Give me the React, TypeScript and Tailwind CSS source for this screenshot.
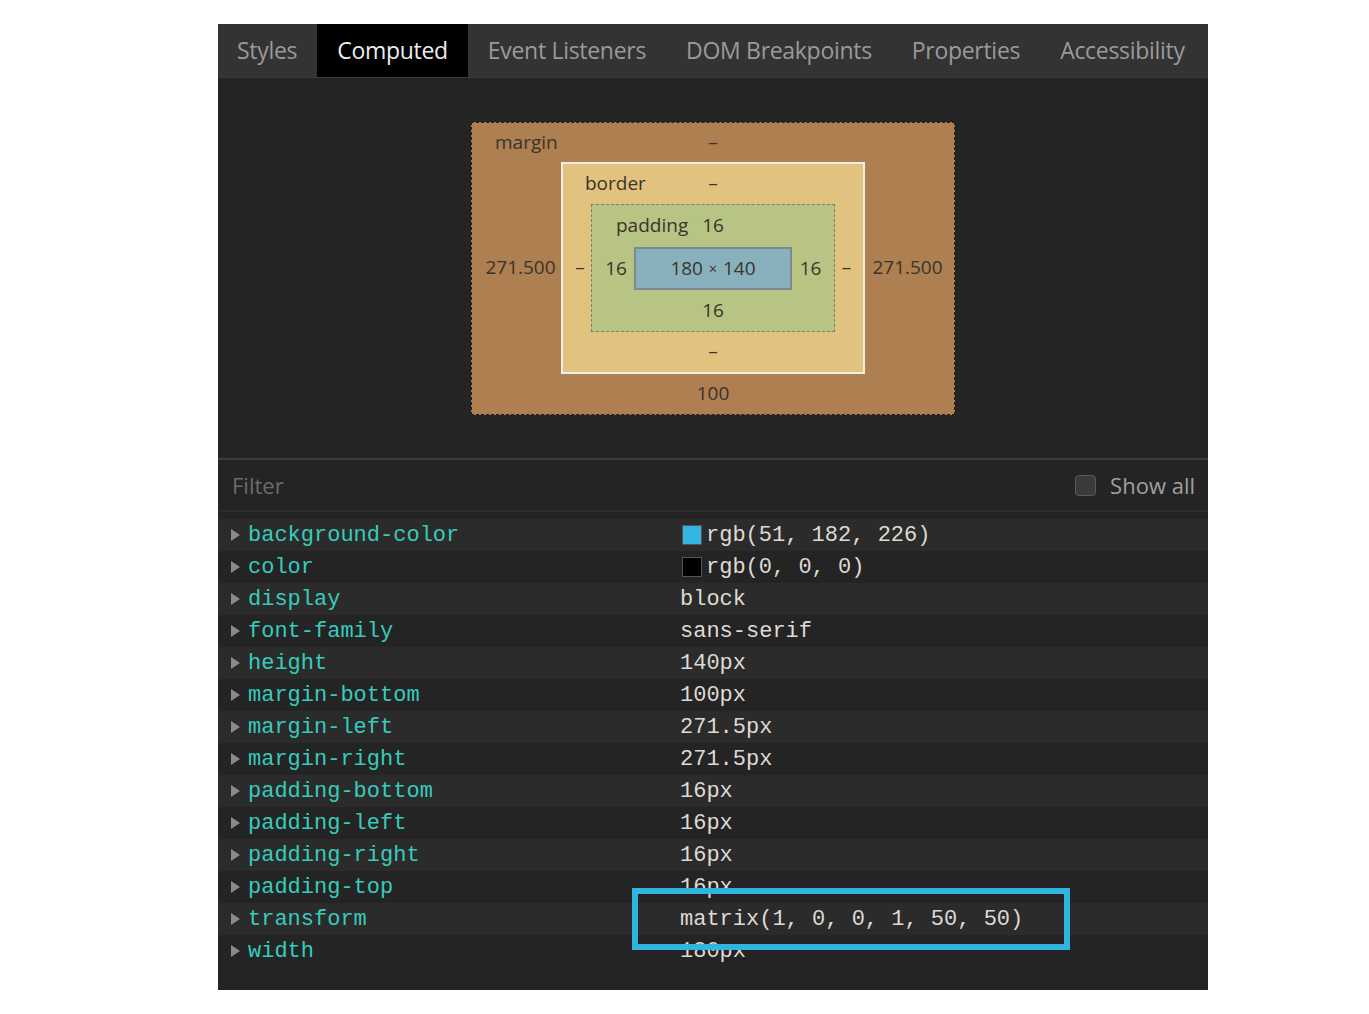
const tabs = ['Styles', 'Computed', 'Event Listeners', 'DOM Breakpoints', 'Properties', 'Accessibility'];

type Prop = { name: string; value: string; swatch?: string };

const props: Prop[] = [
  { name: 'background-color', value: 'rgb(51, 182, 226)', swatch: 'bg-[#33b6e2]' },
  { name: 'color', value: 'rgb(0, 0, 0)', swatch: 'bg-[#000000]' },
  { name: 'display', value: 'block' },
  { name: 'font-family', value: 'sans-serif' },
  { name: 'height', value: '140px' },
  { name: 'margin-bottom', value: '100px' },
  { name: 'margin-left', value: '271.5px' },
  { name: 'margin-right', value: '271.5px' },
  { name: 'padding-bottom', value: '16px' },
  { name: 'padding-left', value: '16px' },
  { name: 'padding-right', value: '16px' },
  { name: 'padding-top', value: '16px' },
  { name: 'transform', value: 'matrix(1, 0, 0, 1, 50, 50)' },
  { name: 'width', value: '180px' },
];

const ui = { fontFamily: '"Open Sans", "Noto Sans", sans-serif' };
const mono = { fontFamily: '"Liberation Mono", "DejaVu Sans Mono", monospace' };

function BoxModel() {
  return (
    <div className="flex h-[380px] items-center justify-center text-[19px] text-[#3a342c]" style={ui}>
      {/* margin */}
      <div className="flex h-[293px] w-[484px] flex-col border border-dashed border-[#2a2218] bg-[#ad7f51]">
        <div className="grid h-[39px] grid-cols-[1fr_auto_1fr] items-center">
          <span className="pl-[23px]">margin</span>
          <span>–</span>
          <span />
        </div>
        <div className="flex items-center">
          <div className="w-[89px] pl-[8px] text-center">271.500</div>
          {/* border */}
          <div className="flex h-[212px] w-[304px] flex-col border-2 border-[#f0ede6] bg-[#e2c27f]">
            <div className="grid h-[40px] grid-cols-[1fr_auto_1fr] items-center">
              <span className="pl-[22px]">border</span>
              <span>–</span>
              <span />
            </div>
            <div className="flex items-center">
              <div className="w-[28px] pl-[6px] text-center">–</div>
              {/* padding */}
              <div className="flex h-[128px] w-[244px] flex-col border border-dashed border-[#7e7e6e] bg-[#b8c483]">
                <div className="grid h-[42px] grid-cols-[1fr_auto_1fr] items-center">
                  <span className="pl-[24px]">padding</span>
                  <span>16</span>
                  <span />
                </div>
                <div className="flex items-center">
                  <div className="w-[42px] pl-[6px] text-center">16</div>
                  <div className="flex h-[43px] w-[158px] items-center justify-center border-2 border-[#7c8a8e] bg-[#88b1bd]">
                    180 <span className="mx-[6px] text-[14px]">×</span> 140
                  </div>
                  <div className="w-[42px] pr-[5px] text-center">16</div>
                </div>
                <div className="flex flex-1 items-center justify-center">16</div>
              </div>
              <div className="w-[28px] pr-[5px] text-center">–</div>
            </div>
            <div className="flex flex-1 items-center justify-center">–</div>
          </div>
          <div className="w-[89px] pr-[4px] text-center">271.500</div>
        </div>
        <div className="flex flex-1 items-center justify-center">100</div>
      </div>
    </div>
  );
}

export default function App() {
  return (
    <div className="min-h-[1014px] bg-white pl-[218px] pt-[24px]">
      <div className="relative flex h-[966px] w-[990px] flex-col bg-[#242424]">
        {/* tabs */}
        <div className="flex h-[54px] overflow-hidden whitespace-nowrap border-b border-[#3b3b3b] bg-[#333333] text-[23px] tracking-[-0.3px]" style={ui}>
          {tabs.map((t) =>
            t === 'Computed' ? (
              <div key={t} className="flex shrink-0 items-center bg-black px-[20px] text-[#ececec]">
                {t}
              </div>
            ) : (
              <div key={t} className="flex shrink-0 items-center px-[20px] text-[#9a9a9a] first:pl-[19px]">
                {t}
              </div>
            )
          )}
        </div>

        <BoxModel />

        {/* filter */}
        <div
          className="flex h-[54px] items-center justify-between border-y-2 border-t-[#3c3c3c] border-b-[#2c2c2c] pl-[14px] pr-[13px] text-[22px]"
          style={ui}
        >
          <span className="text-[#6c6c6c]">Filter</span>
          <div className="flex items-center gap-[14px] text-[#a0a0a0]">
            <span className="h-[21px] w-[21px] rounded-[4px] border border-[#5a5a5a] bg-[#3a3a3a]" />
            <span>Show all</span>
          </div>
        </div>

        {/* properties */}
        <div className="pt-[7px] text-[22px]" style={mono}>
          {props.map((p, i) => (
            <div key={p.name} className={i % 2 === 0 ? 'flex h-[32px] items-center bg-[#2b2b2b]' : 'flex h-[32px] items-center'}>
              <div className="flex w-[462px] items-center pl-[13px]">
                <span className="mr-[8px] h-0 w-0 border-y-[6px] border-l-[9px] border-y-transparent border-l-[#8a8a8a]" />
                <span className="text-[#36cbbd]">{p.name}</span>
              </div>
              <div className="flex items-center text-[#dedad4]">
                {p.swatch && <span className={`mr-[4px] ml-[2px] h-[20px] w-[20px] border border-[#555] ${p.swatch}`} />}
                <span>{p.value}</span>
              </div>
            </div>
          ))}
        </div>

        {/* highlight annotation */}
        <div className="absolute left-[414px] top-[864px] h-[62px] w-[438px] border-[6px] border-[#31b4e0]" />
      </div>
    </div>
  );
}
